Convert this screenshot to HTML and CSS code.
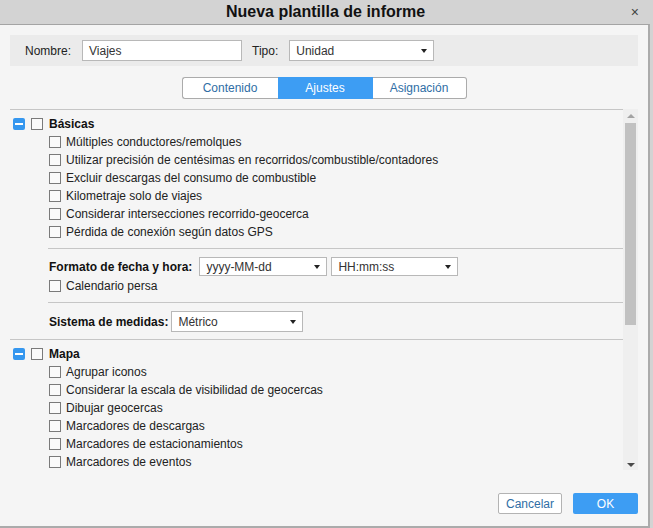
FILE: index.html
```html
<!DOCTYPE html>
<html lang="es">
<head>
<meta charset="utf-8">
<title>Nueva plantilla de informe</title>
<link rel="stylesheet" href="styles.css">
</head>
<body>
<div class="window">
  <div class="titlebar">
    <span class="title">Nueva plantilla de informe</span>
    <span class="close">×</span>
  </div>
  <div class="body">
    <div class="toppanel">
      <span class="lbl">Nombre:</span>
      <div class="field name">Viajes</div>
      <span class="lbl tipo-lbl">Tipo:</span>
      <div class="field select tipo"><span>Unidad</span><span class="caret"></span></div>
    </div>
    <div class="tabs">
      <div class="tab first">Contenido</div>
      <div class="tab active">Ajustes</div>
      <div class="tab last">Asignación</div>
    </div>
    <div class="main">
      <div class="content">
        <div class="head"><span class="minus"></span><span class="cb"></span><b>Básicas</b></div>
        <div class="items">
          <div class="row"><span class="cb"></span>Múltiples conductores/remolques</div>
          <div class="row"><span class="cb"></span>Utilizar precisión de centésimas en recorridos/combustible/contadores</div>
          <div class="row"><span class="cb"></span>Excluir descargas del consumo de combustible</div>
          <div class="row"><span class="cb"></span>Kilometraje solo de viajes</div>
          <div class="row"><span class="cb"></span>Considerar intersecciones recorrido-geocerca</div>
          <div class="row"><span class="cb"></span>Pérdida de conexión según datos GPS</div>
        </div>
        <div class="sep indent"></div>
        <div class="formrow fecha">
          <b class="flbl">Formato de fecha y hora:</b>
          <div class="field select date"><span>yyyy-MM-dd</span><span class="caret"></span></div>
          <div class="field select time"><span>HH:mm:ss</span><span class="caret"></span></div>
        </div>
        <div class="items">
          <div class="row"><span class="cb"></span>Calendario persa</div>
        </div>
        <div class="sep indent"></div>
        <div class="formrow medidas">
          <b class="flbl">Sistema de medidas:</b>
          <div class="field select units"><span>Métrico</span><span class="caret"></span></div>
        </div>
        <div class="sep full"></div>
        <div class="head mapa"><span class="minus"></span><span class="cb"></span><b>Mapa</b></div>
        <div class="items">
          <div class="row"><span class="cb"></span>Agrupar iconos</div>
          <div class="row"><span class="cb"></span>Considerar la escala de visibilidad de geocercas</div>
          <div class="row"><span class="cb"></span>Dibujar geocercas</div>
          <div class="row"><span class="cb"></span>Marcadores de descargas</div>
          <div class="row"><span class="cb"></span>Marcadores de estacionamientos</div>
          <div class="row"><span class="cb"></span>Marcadores de eventos</div>
        </div>
      </div>
      <div class="scrollbar">
        <span class="arrow up"></span>
        <div class="thumb"></div>
        <div class="spacer"></div>
        <span class="arrow down"></span>
      </div>
    </div>
    <div class="footer">
      <div class="btn cancel">Cancelar</div>
      <div class="btn ok">OK</div>
    </div>
  </div>
</div>
</body>
</html>
```
FILE: styles.css
```css
* { box-sizing: border-box; }
html, body { margin: 0; padding: 0; }
body {
  width: 653px;
  height: 528px;
  background: #d3d3d3;
  font-family: "Liberation Sans", Arial, sans-serif;
  font-size: 12px;
  color: #222;
  overflow: hidden;
}
.window { width: 653px; }
.titlebar {
  height: 24px;
  background: #d3d3d3;
  position: relative;
  display: flex;
  justify-content: center;
  align-items: center;
}
.title {
  font-size: 16px;
  font-weight: bold;
  color: #111;
  margin-left: -2px;
}
.close {
  position: absolute;
  right: 14px;
  top: 4px;
  font-size: 14px;
  color: #444;
}
.body {
  width: 650px;
  height: 504px;
  background: #f5f5f5;
  border-top: 1px solid #a4a4a4;
  border-right: 2px solid #ababab;
  border-bottom: 2px solid #ababab;
  padding: 10px 10px 0 10px;
}
.toppanel {
  height: 31px;
  background: #ebebeb;
  display: flex;
  align-items: center;
  padding-left: 15px;
}
.lbl { color: #222; }
.field {
  height: 21px;
  background: #fff;
  border: 1px solid #b8b8b8;
  display: flex;
  align-items: center;
  padding-left: 6px;
  color: #333;
}
.name { width: 160px; margin-left: 11px; }
.tipo-lbl { margin-left: 10px; }
.tipo { width: 145px; margin-left: 11px; }
.select { justify-content: space-between; padding-right: 6px; }
.caret {
  width: 0;
  height: 0;
  border-left: 3.5px solid transparent;
  border-right: 3.5px solid transparent;
  border-top: 4px solid #222;
}
.tabs {
  display: flex;
  justify-content: center;
  margin-top: 11px;
  height: 22px;
}
.tab {
  width: 95px;
  height: 22px;
  border: 1px solid #ababab;
  background: #fff;
  color: #2f6ea5;
  display: flex;
  align-items: center;
  justify-content: center;
}
.tab.first { border-radius: 3px 0 0 3px; border-right: none; width: 96px; }
.tab.last { border-radius: 0 3px 3px 0; border-left: none; width: 94px; }
.tab.active { background: #3d9df3; border-color: #3d9df3; color: #fff; }
.main {
  display: flex;
  margin-top: 10px;
  height: 361px;
}
.content {
  width: 613px;
  border-top: 1px solid #c6c6c6;
  overflow: hidden;
  padding-top: 5px;
}
.head {
  height: 18px;
  display: flex;
  align-items: center;
  padding-left: 3px;
  color: #111;
}
.head b { margin-left: 6px; }
.head .cb { margin-left: 6px; }
.head.mapa { margin-top: 5px; }
.minus {
  width: 12px;
  height: 12px;
  background: #3597ef;
  border-radius: 2px;
  position: relative;
  display: inline-block;
}
.minus::after {
  content: "";
  position: absolute;
  left: 2px;
  right: 2px;
  top: 5px;
  height: 2px;
  background: #fff;
}
.cb {
  width: 12px;
  height: 12px;
  border: 1px solid #7a7a7a;
  background: #fafafa;
  display: inline-block;
  flex: none;
}
.items { padding-left: 39px; }
.row {
  height: 18px;
  display: flex;
  align-items: center;
  color: #222;
}
.row .cb { margin-right: 5px; }
.sep { height: 1px; background: #c6c6c6; margin-top: 7px; }
.sep.indent { margin-left: 38px; }
.formrow {
  display: flex;
  align-items: center;
  padding-left: 39px;
  margin-top: 8px;
  color: #111;
}
.fecha { height: 20px; }
.fecha .field { height: 19px; margin-bottom: 1px; }
.date { width: 128px; margin-left: 7px; }
.time { width: 127px; margin-left: 4px; }
.medidas { height: 21px; }
.units { width: 132px; margin-left: 3px; }
.scrollbar {
  width: 15px;
  height: 361px;
  background: #efefef;
  display: flex;
  flex-direction: column;
  align-items: center;
  padding-top: 5px;
  padding-bottom: 3px;
}
.arrow {
  width: 0;
  height: 0;
  border-left: 4px solid transparent;
  border-right: 4px solid transparent;
}
.arrow.up { border-bottom: 4px solid #a3a3a3; }
.arrow.down { border-top: 4px solid #4a4a4a; }
.thumb {
  width: 11px;
  height: 202px;
  background: #c1c1c1;
  margin-top: 5px;
}
.spacer { flex: 1; }
.footer {
  display: flex;
  justify-content: flex-end;
  margin-top: 23px;
  gap: 11px;
}
.btn {
  height: 21px;
  display: flex;
  align-items: center;
  justify-content: center;
  border-radius: 2px;
  font-size: 12px;
}
.cancel {
  width: 64px;
  background: #fff;
  border: 1px solid #b3b3b3;
  color: #2f6ea5;
}
.ok {
  width: 65px;
  background: #3d9df3;
  color: #fff;
}
```
